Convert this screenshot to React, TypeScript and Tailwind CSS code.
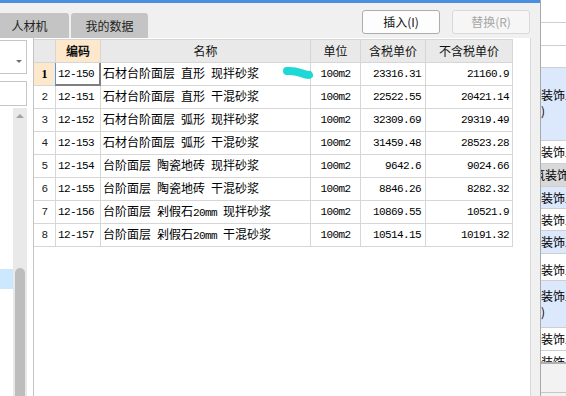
import React from "react";

const rows: string[][] = [
  ["12-150", "石材台阶面层 直形 现拌砂浆", "100m2", "23316.31", "21160.9"],
  ["12-151", "石材台阶面层 直形 干混砂浆", "100m2", "22522.55", "20421.14"],
  ["12-152", "石材台阶面层 弧形 现拌砂浆", "100m2", "32309.69", "29319.49"],
  ["12-153", "石材台阶面层 弧形 干混砂浆", "100m2", "31459.48", "28523.28"],
  ["12-154", "台阶面层 陶瓷地砖 现拌砂浆", "100m2", "9642.6", "9024.66"],
  ["12-155", "台阶面层 陶瓷地砖 干混砂浆", "100m2", "8846.26", "8282.32"],
  ["12-156", "台阶面层 剁假石20mm 现拌砂浆", "100m2", "10869.55", "10521.9"],
  ["12-157", "台阶面层 剁假石20mm 干混砂浆", "100m2", "10514.15", "10191.32"],
];

const MONO = "font-['Liberation_Mono',monospace] text-[11px] tracking-[-0.6px] whitespace-pre";

function Mixed({ text }: { text: string }) {
  const parts = text.split(/([ -~]+)/).filter((p) => p.length > 0);
  return (
    <span className="whitespace-pre leading-none">
      {parts.map((p, i) =>
        /^[ -~]+$/.test(p) ? (
          <span key={i} className={MONO}>
            {p}
          </span>
        ) : (
          <span key={i} className="text-[12px]">
            {p}
          </span>
        )
      )}
    </span>
  );
}

const cellBase = "h-[23px] border-r border-b border-[#d6d6d6] flex items-center shrink-0";

function RightRow({
  h,
  bg,
  children,
  cls,
}: {
  h: string;
  bg: string;
  children?: React.ReactNode;
  cls?: string;
}) {
  return (
    <div className={`${h} ${bg} ${cls ?? ""} border-b border-[#cfcfcf] overflow-hidden whitespace-nowrap text-[12px] leading-[16px] shrink-0`}>
      {children}
    </div>
  );
}

export default function App() {
  return (
    <div className="relative w-[566px] h-[396px] flex overflow-hidden bg-[#f0f0f0] font-['Noto_Sans_CJK_SC','Noto_Sans',sans-serif] text-[12px] text-black">
      {/* Dialog */}
      <div className="w-[540px] h-full flex flex-col shrink-0">
        <div className="h-[3px] bg-[#4a8fdf] shrink-0" />
        <div className="h-[35px] flex shrink-0">
          <div className="flex gap-[2px] mt-[10px] h-[25px]">
            <div className="-ml-[10px] w-[79px] h-full bg-[#c4c4c4] rounded-t-[3px] flex items-center justify-center text-[12px] text-[#222]">
              人材机
            </div>
            <div className="w-[77px] h-full bg-[#c4c4c4] rounded-t-[3px] flex items-center justify-center text-[12px] text-[#222]">
              我的数据
            </div>
          </div>
          <div className="ml-auto mr-[10px] mt-[7px] flex gap-[12px] h-[24px]">
            <div className="w-[78px] h-full border border-[#adadad] rounded-[3px] bg-[#fdfdfd] flex items-center justify-center text-[12px] text-[#111]">
              插入(I)
            </div>
            <div className="w-[78px] h-full border border-[#d9d9d9] rounded-[3px] bg-[#f6f6f6] flex items-center justify-center text-[12px] text-[#a6a6a6]">
              替换(R)
            </div>
          </div>
        </div>
        <div className="flex-1 flex min-h-0">
          {/* left panel */}
          <div className="w-[33px] shrink-0 bg-white flex flex-col">
            <div className="mt-[2px] w-[27px] h-[34px] border-t border-r border-b border-[#c6c6c6] bg-white relative shrink-0">
              <div className="absolute left-[16px] top-[19px] w-0 h-0 border-l-[3px] border-r-[3px] border-t-[3px] border-l-transparent border-r-transparent border-t-[#707070]" />
            </div>
            <div className="mt-[7px] w-[27px] h-[25px] border-t border-r border-b border-[#c6c6c6] bg-white shrink-0" />
            <div className="flex flex-1 mt-[2px]">
              <div className="w-[13px] flex flex-col">
                <div className="h-[161px]" />
                <div className="h-[20px] bg-[#cce8ff]" />
              </div>
              <div className="w-[14px] bg-[#e9e9e9] flex flex-col items-center">
                <div className="mt-[6px] w-0 h-0 border-l-[4px] border-r-[4px] border-b-[4px] border-l-transparent border-r-transparent border-b-[#a3a3a3]" />
                <div className="mt-[150px] w-[10px] flex-1 bg-[#bdbdbd] rounded-t-[5px]" />
              </div>
            </div>
          </div>
          {/* table panel */}
          <div className="w-[498px] shrink-0 bg-white border-l border-l-[#c4c4c4] border-r border-r-[#d9d9d9] pt-[1px]">
            <div className="flex">
              {[
                ["w-[22px]", "", "bg-[#e9e9e9]"],
                ["w-[45px]", "编码", "bg-[#fde8cc] font-bold"],
                ["w-[210px]", "名称", "bg-[#e9e9e9]"],
                ["w-[50px]", "单位", "bg-[#e9e9e9]"],
                ["w-[65px]", "含税单价", "bg-[#e9e9e9]"],
                ["w-[87px]", "不含税单价", "bg-[#e9e9e9]"],
              ].map(([w, t, c], i) => (
                <div
                  key={i}
                  className={`${w} ${c} h-[24px] border-t border-r border-b border-[#d6d6d6] flex items-center justify-center text-[12px] leading-none shrink-0 text-[#111]`}
                >
                  {t}
                </div>
              ))}
            </div>
            {rows.map((r, i) => (
              <div key={i} className="flex">
                <div
                  className={`${cellBase} w-[22px] justify-center ${
                    i === 0 ? "bg-[#fde8cc] font-bold font-['Liberation_Serif',serif] text-[12px] leading-none" : `${MONO} text-[#222]`
                  }`}
                >
                  {i + 1}
                </div>
                <div className={`${cellBase} w-[45px] pl-[2px] relative`}>
                  <span className={MONO}>{r[0]}</span>
                  {i === 0 && (
                    <div className="absolute -left-px top-0 -right-px -bottom-px border-l border-l-[#4a9af0] border-r-2 border-r-[#7f7f7f] border-b-2 border-b-[#7f7f7f]" />
                  )}
                </div>
                <div className={`${cellBase} w-[210px] pl-[2px]`}>
                  <Mixed text={r[1]} />
                </div>
                <div className={`${cellBase} w-[50px] justify-center`}>
                  <span className={MONO}>{r[2]}</span>
                </div>
                <div className={`${cellBase} w-[65px] justify-end pr-[4px]`}>
                  <span className={MONO}>{r[3]}</span>
                </div>
                <div className={`${cellBase} w-[87px] justify-end pr-[3px]`}>
                  <span className={MONO}>{r[4]}</span>
                </div>
              </div>
            ))}
          </div>
          <div className="w-[9px] shrink-0 bg-[#f0f0f0]" />
        </div>
      </div>
      {/* right panel */}
      <div className="w-[26px] h-full shrink-0 border-l border-[#a9a9a9] bg-white flex flex-col">
        <RightRow h="h-[23px]" bg="bg-white" />
        <RightRow h="h-[23px]" bg="bg-white" />
        <RightRow h="h-[22px]" bg="bg-white" />
        <RightRow h="h-[73px]" bg="bg-[#dce8fc]" cls="pt-[19px]">
          <div>装饰工</div>
          <div>)</div>
        </RightRow>
        <RightRow h="h-[23px]" bg="bg-white" cls="flex items-center">
          装饰工
        </RightRow>
        <RightRow h="h-[23px]" bg="bg-[#d9d9d9]" cls="flex items-center">
          <span className="-ml-[8px]">筑装饰工</span>
        </RightRow>
        <RightRow h="h-[22px]" bg="bg-[#dce8fc]" cls="flex items-center">
          装饰工
        </RightRow>
        <RightRow h="h-[22px]" bg="bg-white" cls="flex items-center">
          装饰工
        </RightRow>
        <RightRow h="h-[23px]" bg="bg-[#dce8fc]" cls="flex items-center">
          装饰工
        </RightRow>
        <RightRow h="h-[27px]" bg="bg-white" cls="flex items-center pt-[5px]">
          装饰工
        </RightRow>
        <RightRow h="h-[47px]" bg="bg-[#dce8fc]" cls="pt-[7px]">
          <div>装饰工</div>
          <div>)</div>
        </RightRow>
        <RightRow h="h-[23px]" bg="bg-white" cls="flex items-center">
          装饰工
        </RightRow>
        <div className="h-[11px] bg-white overflow-hidden whitespace-nowrap text-[12px] leading-[12px] pt-[5px] shrink-0">
          装饰工
        </div>
        <div className="h-[2px] bg-[#b0b0b0] shrink-0" />
        <div className="h-[29px] bg-[#f2f2f2] border-b border-[#c8c8c8] shrink-0" />
        <div className="flex-1 bg-[#f2f2f2]" />
      </div>
      {/* highlighter mark */}
      <svg className="absolute left-0 top-0 pointer-events-none" width="566" height="396">
        <path
          d="M287 71 Q294 70.5 301 73 T309 75"
          stroke="#1ed8d6"
          strokeWidth="8"
          strokeLinecap="round"
          fill="none"
        />
      </svg>
    </div>
  );
}
